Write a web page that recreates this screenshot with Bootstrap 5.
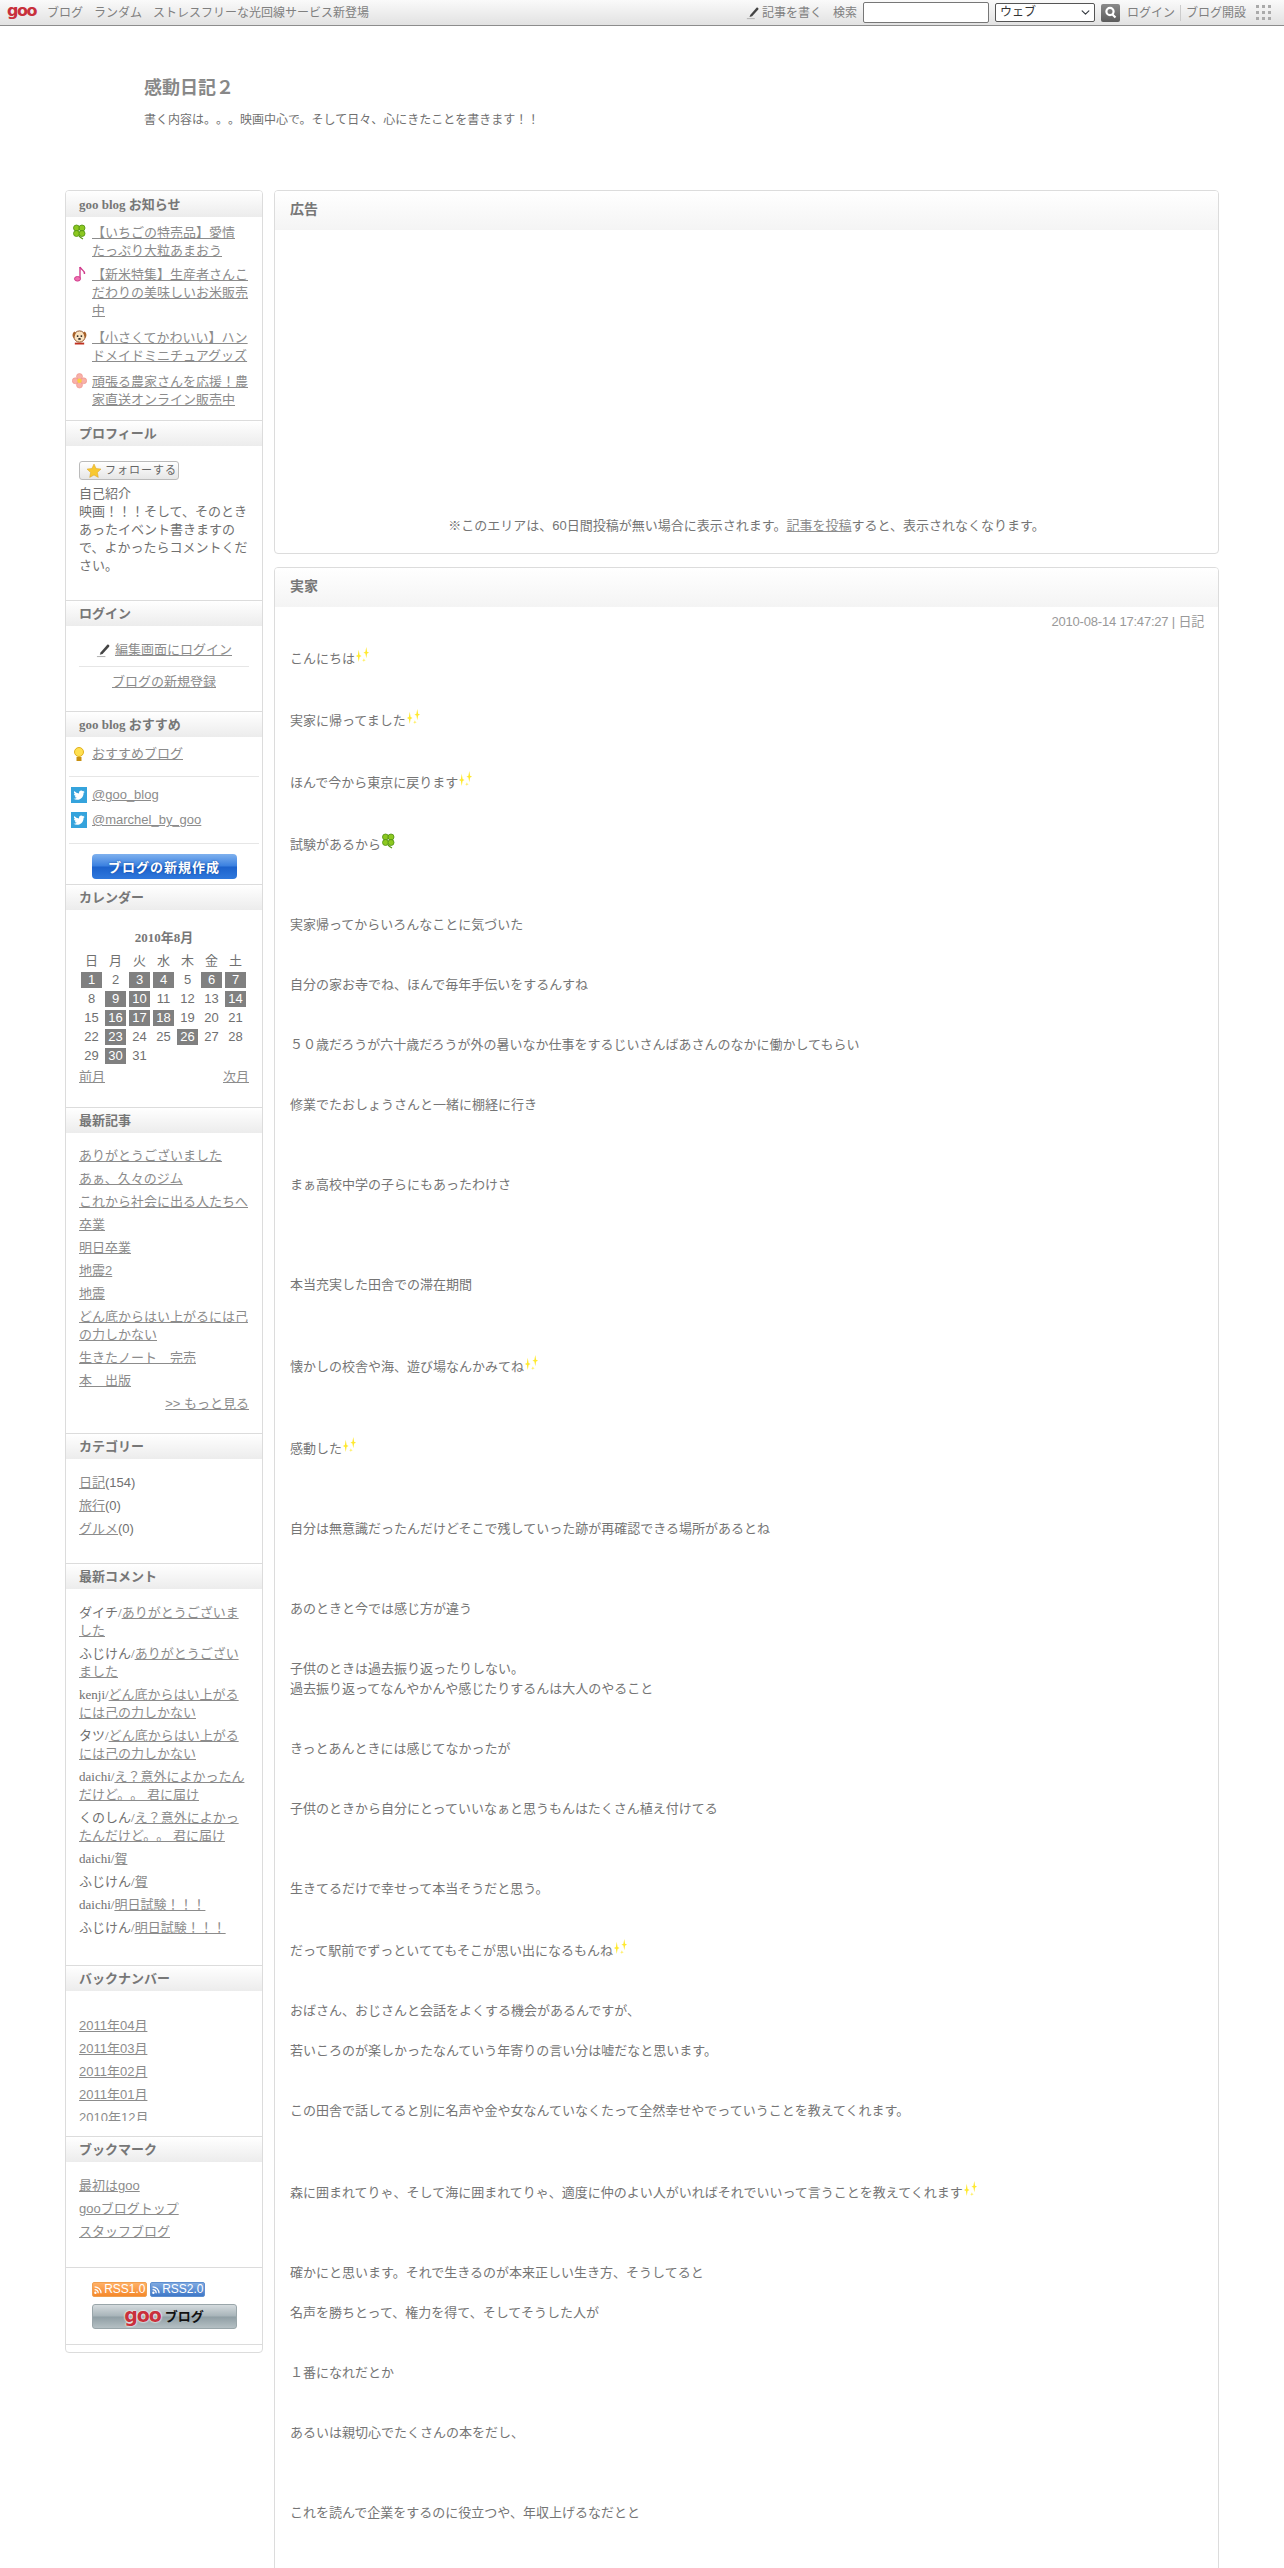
<!DOCTYPE html>
<html lang="ja">
<head>
    <meta charset="UTF-8">
    <title>感動日記２</title>
    <link href="https://cdn.jsdelivr.net/npm/bootstrap@5.3.3/dist/css/bootstrap.min.css" rel="stylesheet">
    <style>
        html, body { height: 2568px; overflow: hidden; }
        body { background: #fff; color: #707070; font: 13px/18px "Liberation Serif", "Noto Sans CJK JP", serif; text-spacing-trim: space-all; }
        a, .cat-num { font-family: "Liberation Sans", "Noto Sans CJK JP", sans-serif; }
        a { color: #8c8c8c; }
        a:hover { color: #666; }

        /* top bar */
        .top-bar { height: 26px; padding: 0 12px 0 7px; background: linear-gradient(#fafafa, #e2e2e2); border-bottom: 1px solid #8c8c8c; font-size: 12px; color: #808080; }
        .top-bar a { color: #808080; text-decoration: none; }
        .top-bar .goo-mark { width: 29px; margin-right: 11px; font: bold 16px/20px "DejaVu Sans", sans-serif; letter-spacing: -1.500px; color: #c8303c; position: relative; top: -2px; }
        .nav-gap { margin-right: 11px; }
        .top-write { margin-left: 2px; }
        .top-label { margin-left: 11px; }
        .top-search { width: 126px; height: 21px; margin-left: 6px; padding: 0 4px; border: 1px solid #777; border-radius: 2px; }
        .top-scope { width: 100px; height: 19px; margin-left: 6px; padding: 0 20px 0 4px; border: 1px solid #555; border-radius: 2px; font-size: 12px; line-height: 17px; color: #333; background-position: right 3px center; background-size: 11px 9px; }
        .top-find { width: 19px; height: 18px; margin-left: 6px; border-radius: 2px; background: linear-gradient(#8a8a8a, #5c5c5c); }
        .top-login { margin-left: 7px; }
        .top-split { height: 16px; margin: 0 5px; border-left: 1px solid #ccc; }
        .top-grid { margin-left: 10px; }

        /* blog title */
        .page-wrap { width: 1154px; margin: 0 auto; }
        .blog-head { height: 164px; padding: 50px 0 0 79px; }
        .blog-title { font: bold 18px/24px "Liberation Sans", "Noto Sans CJK JP", sans-serif; color: #888; margin: 0 0 11px; }
        .blog-desc { font-size: 12px; line-height: 18px; color: #707070; margin: 0; }

        /* sidebar */
        .side-col { width: 198px; flex: none; align-self: flex-start; border: 1px solid #dcdcdc; border-radius: 4px; }
        .side-sec { border-bottom: 1px solid #dcdcdc; }
        .side-head { height: 25px; padding: 2px 13px 0; background: linear-gradient(#fff, #ececec); font-weight: bold; line-height: 22px; color: #777; }
        .side-sec:first-child .side-head { height: 26px; padding-top: 3px; border-radius: 3px 3px 0 0; }
        .side-body { padding: 15px 13px 20px; }
        .side-list li { margin-bottom: 5px; }
        .side-foot { height: 7px; }

        .notice-list { padding: 7px 13px 5px 6px; }
        .notice-list li { display: flex; margin-bottom: 6px; }
        .notice-list svg { width: 15px; height: 16px; flex: none; margin-right: 5px; }
        .notice-list .notice-dog { margin: 9px 0 8px; }

        .profile-body { padding-bottom: 25px; }
        .follow-btn { width: 100px; height: 19px; margin-bottom: 5px; padding: 0 0 0 7px; border: 1px solid #bbb; border-radius: 3px; background: linear-gradient(#fff, #e6e6e6); font-size: 11px; line-height: 17px; letter-spacing: 1px; color: #666; }
        .login-rule { border-top: 1px solid #e6e6e6; margin: 7px 0 6px; }
        .rec-row { padding: 8px 0 0 8px; margin-bottom: 13px; }
        .rec-rule { border-top: 1px solid #e6e6e6; margin: 0 3px; }
        .tw-row { margin-top: 7px; padding-left: 5px; height: 18px; }
        .tw-row svg { margin-right: 5px; }
        .tw-first { margin-top: 9px; }
        .tw-last { margin-bottom: 14px; }
        .new-wrap { padding: 10px 0 5px; }
        .new-blog { width: 145px; height: 25px; padding: 0; border: 0; border-radius: 4px; background: linear-gradient(#7fb1ee, #3a80e0 48%, #1c62cc 52%, #2f78dc); font: bold 13px/25px "Noto Sans CJK JP", sans-serif; letter-spacing: 1px; color: #fff; text-shadow: 0 0 2px #164a9a; }
        .new-blog:hover { background: #2f78dc; color: #fff; }

        .cal-title { margin: 0; padding-top: 4px; text-align: center; font-weight: bold; color: #777; }
        .cal-grid { width: 171px; margin: 3px -1px 1px; border-collapse: separate; border-spacing: 3px; table-layout: fixed; text-align: center; font-family: "Liberation Sans", "Noto Sans CJK JP", sans-serif; color: #707070; }
        .cal-grid th, .cal-grid td { width: 21px; height: 16px; padding: 0; line-height: 16px; font-weight: normal; }
        .cal-grid .cal-on { background: #808080; color: #fff; }
        .cal-body { padding-bottom: 21px; }

        .recent-body { padding-top: 14px; }
        .more-link { margin-top: 2px; }
        .comment-body { padding-bottom: 23px; }
        .back-body { padding-bottom: 15px; }
        .back-box { height: 115px; overflow: hidden; padding-top: 11px; }
        .book-body { padding-bottom: 21px; }

        .rss-wrap { width: 145px; margin: 0 auto; padding: 14px 0 15px; }
        .rss-row { gap: 3px; margin-bottom: 7px; }
        .rss-tag { width: 55px; height: 15px; border-radius: 2px; font: 12px/15px "Liberation Sans", sans-serif; color: #fff; }
        .rss-tag svg { margin-right: 2px; }
        .rss-one { background: linear-gradient(#ffb066, #f5892c); border: 1px solid #f0a050; }
        .rss-two { background: linear-gradient(#7fa9e0, #3f78c8); border: 1px solid #5d8fd0; }
        .goo-btn { width: 145px; height: 25px; border-radius: 3px; background: linear-gradient(#d4dbde, #a8b4b9 48%, #8f9ea4 52%, #b5c0c4); border: 1px solid #9aa6aa; font-weight: bold; color: #111; }
        .goo-btn:hover { color: #111; }
        .goo-btn b { font: bold 19px/20px "DejaVu Sans", sans-serif; letter-spacing: -1px; color: #c8303c; text-shadow: 0 0 2px #fff, 0 0 2px #fff; position: relative; top: -2px; }

        /* main column */
        .main-col { width: 945px; flex: none; font-family: "Liberation Sans", "Noto Sans CJK JP", sans-serif; }
        .main-card { border: 1px solid #dcdcdc; border-radius: 4px; color: #757575; margin-bottom: 13px; }
        .main-card .card-header { height: 39px; padding: 8px 15px 0; border: 0; border-radius: 3px 3px 0 0; background: linear-gradient(#fff, #f4f4f4); font-size: 14px; font-weight: bold; line-height: 20px; color: #777; }
        .ad-body { height: 323px; padding-bottom: 18px; }
        .entry-date { padding: 6px 14px 0 0; text-align: right; letter-spacing: -.2px; color: #999; }
        .entry-date a { color: #999; text-decoration: none; }
        .entry-body { padding: 16px 15px 200px; line-height: 20px; }
        .emo { width: 15px; height: 16px; vertical-align: baseline; }
    </style>
</head>
<body>

<svg width="0" height="0" class="d-block">
    <symbol id="i-clover" viewBox="0 0 15 16" preserveAspectRatio="xMidYMin">
        <path d="M7 12c1 1 2 2 4 3" stroke="#5a9a10" stroke-width="1.2" fill="none"/>
        <g fill="#8cc820" stroke="#4f8f10" stroke-width=".8"><circle cx="4.500" cy="4" r="3"/><circle cx="10" cy="4" r="3"/><circle cx="4.500" cy="9.500" r="3"/><circle cx="10" cy="9.500" r="3"/></g>
    </symbol>
    <symbol id="i-note" viewBox="0 0 15 16">
        <path d="M8 1v11.500" stroke="#d03c8c" stroke-width="1.400"/>
        <path d="M8 1c1 3 5 3 4.500 7" stroke="#d03c8c" stroke-width="1.400" fill="none"/>
        <ellipse cx="5.500" cy="12.800" rx="3" ry="2.300" fill="#f070b0" stroke="#d03c8c"/>
    </symbol>
    <symbol id="i-dog" viewBox="0 0 16 16">
        <path d="M3 14h10v2H3z" fill="#c03020"/>
        <circle cx="8" cy="7.500" r="6" fill="#fbe3c0" stroke="#8a4a20"/>
        <path d="M3 2C0 3 0 8 2 9l2-5zM13 2c3 1 3 6 1 7l-2-5z" fill="#a8622a"/>
        <circle cx="6" cy="7" r="1" fill="#222"/><circle cx="10" cy="7" r="1" fill="#222"/><ellipse cx="8" cy="10" rx="1.500" ry="1" fill="#222"/>
    </symbol>
    <symbol id="i-flower" viewBox="0 0 15 16">
        <g fill="#f8b0a8" stroke="#ee9088" stroke-width=".6"><circle cx="7.500" cy="3.500" r="3"/><circle cx="7.500" cy="12" r="3"/><circle cx="3.300" cy="7.800" r="3"/><circle cx="11.700" cy="7.800" r="3"/></g>
        <circle cx="7.500" cy="7.800" r="2.200" fill="#f8d040"/>
    </symbol>
    <symbol id="i-spark" viewBox="0 0 15 17" preserveAspectRatio="xMidYMin">
        <g fill="#ffe92e"><path d="M11.500 0l.9 5 2.100 1-2.100 1-.9 5-.9-5-2.100-1 2.100-1z"/><path d="M3.500 3l.9 5.500 2.100 1-2.100 1-.9 5.500-.9-5.500-2.100-1 2.100-1z"/><path d="M9 12l.4 1.600 1.600.4-1.600.4L9 16l-.4-1.600L7 14l1.600-.4z"/></g>
    </symbol>
    <symbol id="i-pen" viewBox="0 0 16 16">
        <path d="M5 10.500L12 2.500c1-1 3 .5 2 2L7 12.200 4 13z" fill="#444"/>
        <path d="M1 15h9" stroke="#aaa"/>
    </symbol>
    <symbol id="i-bird" viewBox="0 0 16 16">
        <path fill="#35a3dc" d="M0 0h16v16H0z"/>
        <path fill="#fff" transform="translate(2.500 2.200) scale(.7)" d="M5.026 15c6.038 0 9.341-5.003 9.341-9.334 0-.14 0-.282-.006-.422A6.685 6.685 0 0 0 16 3.542a6.658 6.658 0 0 1-1.889.518 3.301 3.301 0 0 0 1.447-1.817 6.533 6.533 0 0 1-2.087.793A3.286 3.286 0 0 0 7.875 6.030a9.325 9.325 0 0 1-6.767-3.429 3.289 3.289 0 0 0 1.018 4.382A3.323 3.323 0 0 1 .64 6.575v.045a3.288 3.288 0 0 0 2.632 3.218 3.203 3.203 0 0 1-.865.115 3.230 3.230 0 0 1-.614-.057 3.283 3.283 0 0 0 3.067 2.277A6.588 6.588 0 0 1 .78 13.580a6.320 6.320 0 0 1-.78-.045A9.344 9.344 0 0 0 5.026 15z"/>
    </symbol>
    <symbol id="i-rss" viewBox="0 0 12 12">
        <circle cx="3" cy="9.500" r="1.500" fill="#fff"/>
        <path d="M2 5.500c2.500 0 4.500 2 4.500 4.500M2 2c4.500 0 8 3.500 8 8" stroke="#fff" stroke-width="1.500" fill="none"/>
    </symbol>
</svg>

<!-- top bar -->
<nav class="top-bar d-flex align-items-center">
    <a class="goo-mark" href="#">goo</a>
    <a href="#" class="nav-gap">ブログ</a>
    <a href="#" class="nav-gap">ランダム</a>
    <a href="#">ストレスフリーな光回線サービス新登場</a>
    <div class="ms-auto d-flex align-items-center">
        <svg width="14" height="15"><use href="#i-pen"/></svg>
        <a href="#" class="top-write">記事を書く</a>
        <span class="top-label">検索</span>
        <input type="text" class="top-search" aria-label="検索">
        <select class="form-select top-scope" aria-label="検索対象"><option>ウェブ</option></select>
        <span class="top-find d-flex align-items-center justify-content-center">
            <svg width="13" height="13" viewBox="0 0 13 13"><circle cx="6" cy="5.500" r="3.600" fill="none" stroke="#fff" stroke-width="2.200"/><path d="M8.500 8.500l3 3" stroke="#fff" stroke-width="2.200"/></svg>
        </span>
        <a href="#" class="top-login">ログイン</a>
        <span class="top-split"></span>
        <a href="#">ブログ開設</a>
        <svg width="16" height="16" viewBox="0 0 16 16" class="top-grid" fill="#aaa">
            <rect x="0" y="0" width="3" height="3"/><rect x="6" y="0" width="3" height="3"/><rect x="12" y="0" width="3" height="3"/>
            <rect x="0" y="6" width="3" height="3"/><rect x="6" y="6" width="3" height="3"/><rect x="12" y="6" width="3" height="3"/>
            <rect x="0" y="12" width="3" height="3"/><rect x="6" y="12" width="3" height="3"/><rect x="12" y="12" width="3" height="3"/>
        </svg>
    </div>
</nav>

<div class="page-wrap">
    <header class="blog-head">
        <h1 class="blog-title">感動日記２</h1>
        <p class="blog-desc">書く内容は。。。映画中心で。そして日々、心にきたことを書きます！！</p>
    </header>

    <div class="d-flex justify-content-between">
        <!-- sidebar -->
        <aside class="side-col">
            <section class="side-sec">
                <div class="side-head">goo blog お知らせ</div>
                <ul class="list-unstyled mb-0 notice-list">
                    <li><svg><use href="#i-clover"/></svg><a href="#">【いちごの特売品】愛情<br>たっぷり大粒あまおう</a></li>
                    <li><svg><use href="#i-note"/></svg><a href="#">【新米特集】生産者さんこだわりの美味しいお米販売中</a></li>
                    <li class="notice-dog"><svg><use href="#i-dog"/></svg><a href="#">【小さくてかわいい】ハンドメイドミニチュアグッズ</a></li>
                    <li><svg><use href="#i-flower"/></svg><a href="#">頑張る農家さんを応援！農家直送オンライン販売中</a></li>
                </ul>
            </section>

            <section class="side-sec">
                <div class="side-head">プロフィール</div>
                <div class="side-body profile-body">
                    <button type="button" class="follow-btn d-flex align-items-center">
                        <svg width="14" height="14" viewBox="0 0 14 14" class="me-1"><path d="M7 0l2.100 4.500 4.900.6-3.600 3.400.9 4.900L7 11l-4.300 2.400.9-4.900L0 5.100l4.900-.6z" fill="#f8c830" stroke="#d8a020" stroke-width=".5"/></svg>フォローする
                    </button>
                    自己紹介<br>
                    映画！！！そして、そのときあったイベント書きますので、よかったらコメントください。
                </div>
            </section>

            <section class="side-sec">
                <div class="side-head">ログイン</div>
                <div class="side-body text-center">
                    <div class="d-flex justify-content-center align-items-center">
                        <svg width="15" height="16" class="me-1"><use href="#i-pen"/></svg><a href="#">編集画面にログイン</a>
                    </div>
                    <div class="login-rule"></div>
                    <a href="#">ブログの新規登録</a>
                </div>
            </section>

            <section class="side-sec">
                <div class="side-head">goo blog おすすめ</div>
                <div class="d-flex align-items-center rec-row">
                    <svg width="10" height="17" viewBox="0 0 10 17" class="me-2"><circle cx="5" cy="6" r="4.500" fill="#ffe050" stroke="#e0b020"/><path d="M2.500 11h5v4h-5z" fill="#c89010"/></svg>
                    <a href="#">おすすめブログ</a>
                </div>
                <div class="rec-rule"></div>
                <div class="d-flex align-items-center tw-row tw-first">
                    <svg width="16" height="16"><use href="#i-bird"/></svg>
                    <a href="#">@goo_blog</a>
                </div>
                <div class="d-flex align-items-center tw-row tw-last">
                    <svg width="16" height="16"><use href="#i-bird"/></svg>
                    <a href="#">@marchel_by_goo</a>
                </div>
                <div class="rec-rule"></div>
                <div class="text-center new-wrap">
                    <a href="#" class="btn new-blog">ブログの新規作成</a>
                </div>
            </section>

            <section class="side-sec">
                <div class="side-head">カレンダー</div>
                <div class="side-body cal-body">
                    <p class="cal-title">2010年8月</p>
                    <table class="cal-grid">
                        <thead><tr><th>日</th><th>月</th><th>火</th><th>水</th><th>木</th><th>金</th><th>土</th></tr></thead>
                        <tbody>
                        <tr><td class="cal-on">1</td><td>2</td><td class="cal-on">3</td><td class="cal-on">4</td><td>5</td><td class="cal-on">6</td><td class="cal-on">7</td></tr>
                        <tr><td>8</td><td class="cal-on">9</td><td class="cal-on">10</td><td>11</td><td>12</td><td>13</td><td class="cal-on">14</td></tr>
                        <tr><td>15</td><td class="cal-on">16</td><td class="cal-on">17</td><td class="cal-on">18</td><td>19</td><td>20</td><td>21</td></tr>
                        <tr><td>22</td><td class="cal-on">23</td><td>24</td><td>25</td><td class="cal-on">26</td><td>27</td><td>28</td></tr>
                        <tr><td>29</td><td class="cal-on">30</td><td>31</td><td></td><td></td><td></td><td></td></tr>
                        </tbody>
                    </table>
                    <div class="d-flex justify-content-between"><a href="#">前月</a><a href="#">次月</a></div>
                </div>
            </section>

            <section class="side-sec">
                <div class="side-head">最新記事</div>
                <div class="side-body recent-body">
                    <ul class="list-unstyled mb-0 side-list">
                        <li><a href="#">ありがとうございました</a></li>
                        <li><a href="#">あぁ、久々のジム</a></li>
                        <li><a href="#">これから社会に出る人たちへ</a></li>
                        <li><a href="#">卒業</a></li>
                        <li><a href="#">明日卒業</a></li>
                        <li><a href="#">地震2</a></li>
                        <li><a href="#">地震</a></li>
                        <li><a href="#">どん底からはい上がるには己の力しかない</a></li>
                        <li><a href="#">生きたノート　完売</a></li>
                        <li><a href="#">本　出版</a></li>
                    </ul>
                    <div class="text-end more-link"><a href="#">&gt;&gt; もっと見る</a></div>
                </div>
            </section>

            <section class="side-sec">
                <div class="side-head">カテゴリー</div>
                <div class="side-body">
                    <ul class="list-unstyled mb-0 side-list">
                        <li><a href="#">日記</a><span class="cat-num">(154)</span></li>
                        <li><a href="#">旅行</a><span class="cat-num">(0)</span></li>
                        <li><a href="#">グルメ</a><span class="cat-num">(0)</span></li>
                    </ul>
                </div>
            </section>

            <section class="side-sec">
                <div class="side-head">最新コメント</div>
                <div class="side-body comment-body">
                    <ul class="list-unstyled mb-0 side-list">
                        <li>ダイチ/<a href="#">ありがとうございました</a></li>
                        <li>ふじけん/<a href="#">ありがとうございました</a></li>
                        <li>kenji/<a href="#">どん底からはい上がるには己の力しかない</a></li>
                        <li>タツ/<a href="#">どん底からはい上がるには己の力しかない</a></li>
                        <li>daichi/<a href="#">え？意外によかったんだけど。。 君に届け</a></li>
                        <li>くのしん/<a href="#">え？意外によかったんだけど。。 君に届け</a></li>
                        <li>daichi/<a href="#">賀</a></li>
                        <li>ふじけん/<a href="#">賀</a></li>
                        <li>daichi/<a href="#">明日試験！！！</a></li>
                        <li>ふじけん/<a href="#">明日試験！！！</a></li>
                    </ul>
                </div>
            </section>

            <section class="side-sec">
                <div class="side-head">バックナンバー</div>
                <div class="side-body back-body">
                    <div class="back-box">
                        <ul class="list-unstyled mb-0 side-list">
                            <li><a href="#">2011年04月</a></li>
                            <li><a href="#">2011年03月</a></li>
                            <li><a href="#">2011年02月</a></li>
                            <li><a href="#">2011年01月</a></li>
                            <li><a href="#">2010年12月</a></li>
                        </ul>
                    </div>
                </div>
            </section>

            <section class="side-sec">
                <div class="side-head">ブックマーク</div>
                <div class="side-body book-body">
                    <ul class="list-unstyled mb-0 side-list">
                        <li><a href="#">最初はgoo</a></li>
                        <li><a href="#">gooブログトップ</a></li>
                        <li><a href="#">スタッフブログ</a></li>
                    </ul>
                </div>
            </section>

            <section class="side-sec">
                <div class="rss-wrap">
                    <div class="d-flex rss-row">
                        <span class="rss-tag rss-one d-flex align-items-center justify-content-center"><svg width="10" height="10"><use href="#i-rss"/></svg>RSS1.0</span>
                        <span class="rss-tag rss-two d-flex align-items-center justify-content-center"><svg width="10" height="10"><use href="#i-rss"/></svg>RSS2.0</span>
                    </div>
                    <a href="#" class="goo-btn d-flex align-items-center justify-content-center gap-1 text-decoration-none"><b>goo</b>ブログ</a>
                </div>
            </section>
            <div class="side-foot"></div>
        </aside>

        <!-- main column -->
        <main class="main-col">
            <div class="card main-card">
                <div class="card-header">広告</div>
                <div class="ad-body d-flex align-items-end justify-content-center">
                    <span>※このエリアは、60日間投稿が無い場合に表示されます。<a href="#">記事を投稿</a>すると、表示されなくなります。</span>
                </div>
            </div>

            <article class="card main-card">
                <div class="card-header">実家</div>
                <div class="entry-date">2010-08-14 17:47:27 | <a href="#">日記</a></div>
                <div class="entry-body">
                    こんにちは<svg class="emo"><use href="#i-spark"/></svg><br><br><br>
                    実家に帰ってました<svg class="emo"><use href="#i-spark"/></svg><br><br><br>
                    ほんで今から東京に戻ります<svg class="emo"><use href="#i-spark"/></svg><br><br><br>
                    試験があるから<svg class="emo"><use href="#i-clover"/></svg><br><br><br><br>
                    実家帰ってからいろんなことに気づいた<br><br><br>
                    自分の家お寺でね、ほんで毎年手伝いをするんすね<br><br><br>
                    ５０歳だろうが六十歳だろうが外の暑いなか仕事をするじいさんばあさんのなかに働かしてもらい<br><br><br>
                    修業でたおしょうさんと一緒に棚経に行き<br><br><br><br>
                    まぁ高校中学の子らにもあったわけさ<br><br><br><br><br>
                    本当充実した田舎での滞在期間<br><br><br><br>
                    懐かしの校舎や海、遊び場なんかみてね<svg class="emo"><use href="#i-spark"/></svg><br><br><br><br>
                    感動した<svg class="emo"><use href="#i-spark"/></svg><br><br><br><br>
                    自分は無意識だったんだけどそこで残していった跡が再確認できる場所があるとね<br><br><br><br>
                    あのときと今では感じ方が違う<br><br><br>
                    子供のときは過去振り返ったりしない。<br>
                    過去振り返ってなんやかんや感じたりするんは大人のやること<br><br><br>
                    きっとあんときには感じてなかったが<br><br><br>
                    子供のときから自分にとっていいなぁと思うもんはたくさん植え付けてる<br><br><br><br>
                    生きてるだけで幸せって本当そうだと思う。<br><br><br>
                    だって駅前でずっといててもそこが思い出になるもんね<svg class="emo"><use href="#i-spark"/></svg><br><br><br>
                    おばさん、おじさんと会話をよくする機会があるんですが、<br><br>
                    若いころのが楽しかったなんていう年寄りの言い分は嘘だなと思います。<br><br><br>
                    この田舎で話してると別に名声や金や女なんていなくたって全然幸せやでっていうことを教えてくれます。<br><br><br><br>
                    森に囲まれてりゃ、そして海に囲まれてりゃ、適度に仲のよい人がいればそれでいいって言うことを教えてくれます<svg class="emo"><use href="#i-spark"/></svg><br><br><br><br>
                    確かにと思います。それで生きるのが本来正しい生き方、そうしてると<br><br>
                    名声を勝ちとって、権力を得て、そしてそうした人が<br><br><br>
                    １番になれだとか<br><br><br>
                    あるいは親切心でたくさんの本をだし、<br><br><br><br>
                    これを読んで企業をするのに役立つや、年収上げるなだとと
                </div>
            </article>
        </main>
    </div>
</div>

<script src="https://cdn.jsdelivr.net/npm/bootstrap@5.3.3/dist/js/bootstrap.bundle.min.js"></script>
</body>
</html>
